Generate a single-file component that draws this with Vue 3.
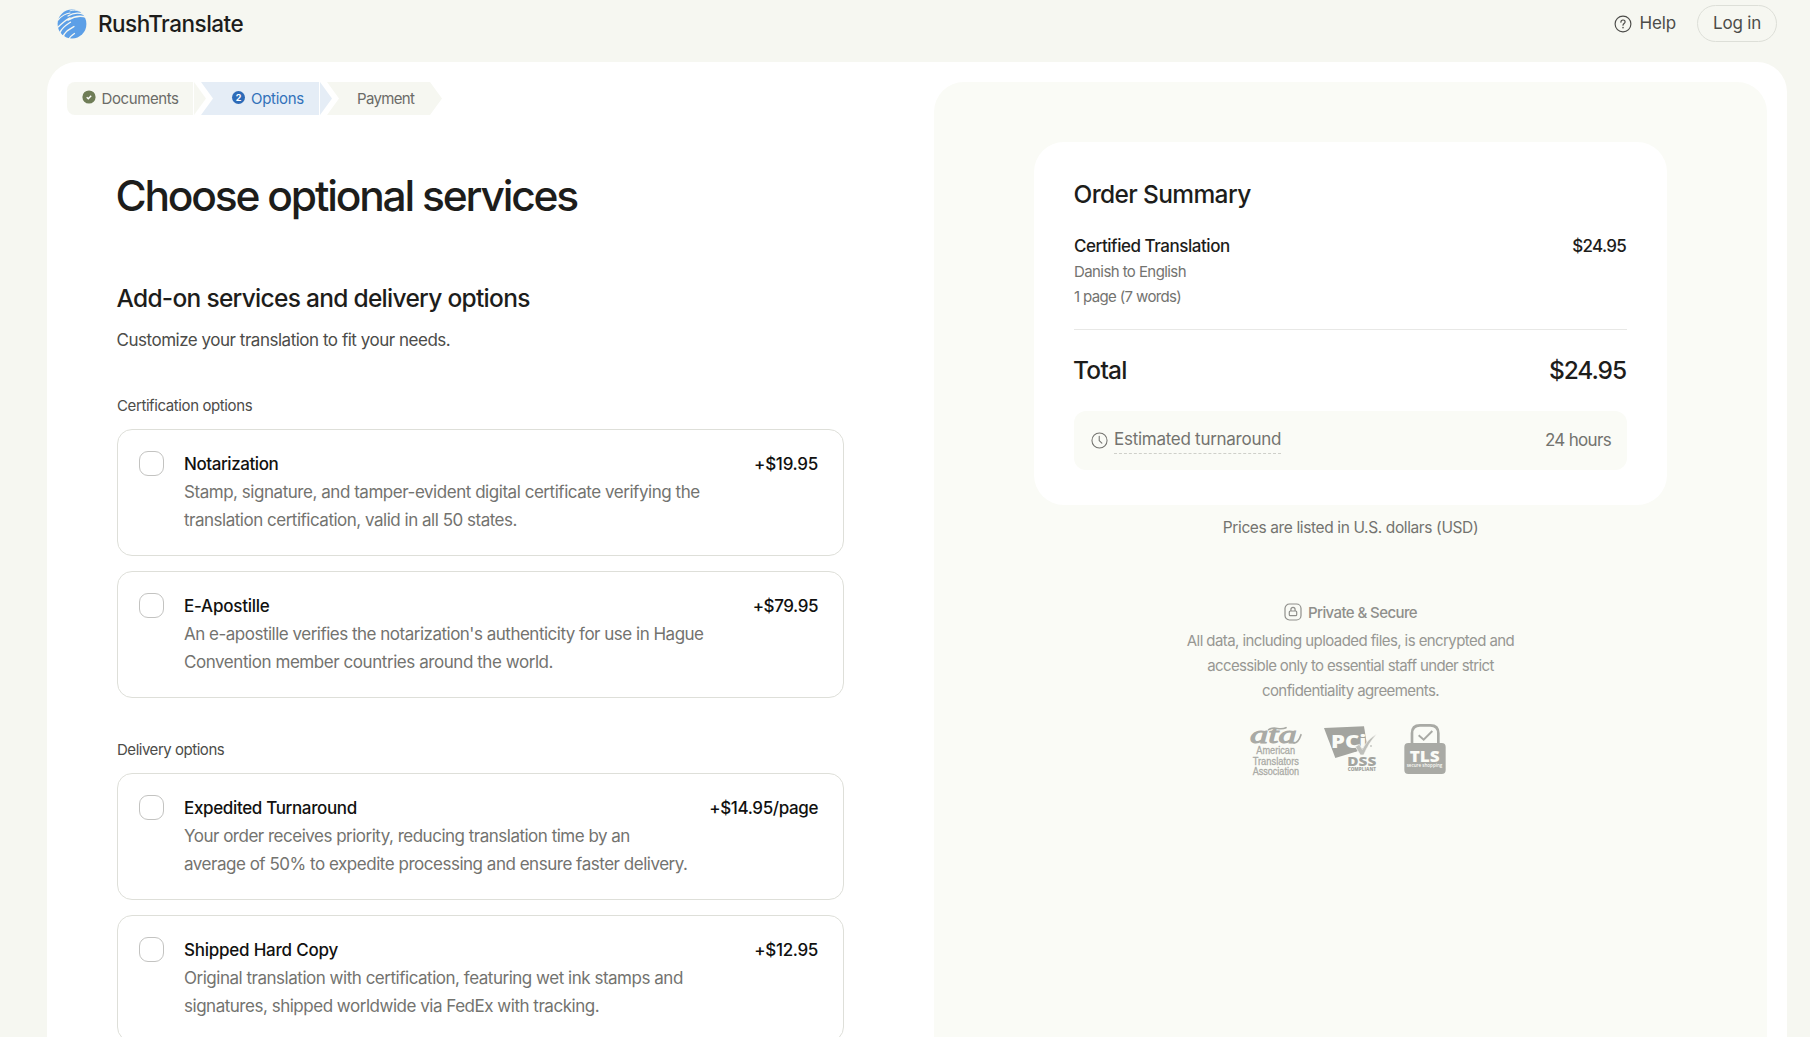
<script setup>
const groups = [
  {
    label: 'Certification options',
    spacing: -0.4,
    items: [
      {
        title: 'Notarization', titleSpacing: -0.43, price: '+$19.95', priceSpacing: -0.28,
        lines: [
          { text: 'Stamp, signature, and tamper-evident digital certificate verifying the', spacing: -0.46 },
          { text: 'translation certification, valid in all 50 states.', spacing: -0.49 },
        ],
      },
      {
        title: 'E-Apostille', titleSpacing: -0.23, price: '+$79.95', priceSpacing: -0.43,
        lines: [
          { text: "An e-apostille verifies the notarization's authenticity for use in Hague", spacing: -0.5 },
          { text: 'Convention member countries around the world.', spacing: -0.44 },
        ],
      },
    ],
  },
  {
    label: 'Delivery options',
    spacing: -0.47,
    items: [
      {
        title: 'Expedited Turnaround', titleSpacing: -0.35, price: '+$14.95/page', priceSpacing: -0.38,
        lines: [
          { text: 'Your order receives priority, reducing translation time by an', spacing: -0.5 },
          { text: 'average of 50% to expedite processing and ensure faster delivery.', spacing: -0.48 },
        ],
      },
      {
        title: 'Shipped Hard Copy', titleSpacing: -0.23, price: '+$12.95', priceSpacing: -0.35,
        lines: [
          { text: 'Original translation with certification, featuring wet ink stamps and', spacing: -0.48 },
          { text: 'signatures, shipped worldwide via FedEx with tracking.', spacing: -0.48 },
        ],
      },
    ],
  },
]

const px = (n) => ({ letterSpacing: n + 'px' })
</script>

<template>
  <div class="page">
    <header class="topbar">
      <div class="brand">
        <svg class="globe" viewBox="0 0 30 30" width="30" height="30">
          <circle cx="15" cy="15" r="14.4" fill="#5c9fe7" />
          <g fill="none" stroke="#f6f7f1" stroke-linecap="round">
            <path d="M1 11C5 6.500 9 4.500 13 4" stroke-width="1.200" />
            <path d="M11 7C16 3.800 22 3.500 27 5.500" stroke-width="1.200" />
            <path d="M0.500 18.500C5 15 8 11 13 8.800" stroke-width="1.300" />
            <path d="M11 11C17 7.300 24 6.500 30 8.500" stroke-width="1.500" />
            <path d="M3 23.500C4.500 19 8.500 16.500 13.500 13.200" stroke-width="1.300" />
            <path d="M6 28C7.500 23 11 21 17 17.500" stroke-width="1.300" />
            <path d="M12 30C13 27.500 14.500 26.500 17.500 24.500" stroke-width="1.200" />
            <path d="M13 1.800C16 1 19 1 22 2" stroke-width="0.800" />
          </g>
        </svg>
        <span class="brand-name">RushTranslate</span>
      </div>
      <nav class="actions">
        <a class="help">
          <svg viewBox="0 0 18 18" width="18" height="18" fill="none" stroke="#4c4c49" stroke-width="1.150" stroke-linecap="round">
            <circle cx="9" cy="9" r="7.900" />
            <path d="M6.900 7.200C6.900 5.900 7.800 5 9 5s2.100.8 2.100 1.900c0 1.500-2.100 1.700-2.100 3.300" />
            <path d="M9 12.600v.2" stroke-width="1.500" />
          </svg>
          <span>Help</span>
        </a>
        <a class="login">Log in</a>
      </nav>
    </header>

    <main class="sheet">
      <section class="left">
        <ol class="steps">
          <li class="step done">
            <svg viewBox="0 0 14 14" width="14" height="14">
              <circle cx="7" cy="7" r="6.600" fill="#6f7d57" />
              <path d="M4.700 7.200l1.600 1.500 2.900-3" fill="none" stroke="#fff" stroke-width="1.400" />
            </svg>
            <span>Documents</span>
          </li>
          <li class="step current"><b class="num">2</b><span>Options</span></li>
          <li class="step last"><span>Payment</span></li>
        </ol>

        <div class="content">
          <h1>Choose optional services</h1>
          <h2>Add-on services and delivery options</h2>
          <p class="lead">Customize your translation to fit your needs.</p>

          <div v-for="g in groups" :key="g.label" class="group">
            <div class="group-label" :style="px(g.spacing)">{{ g.label }}</div>
            <label v-for="i in g.items" :key="i.title" class="option">
              <span class="box"></span>
              <span class="body">
                <span class="head">
                  <span class="title" :style="px(i.titleSpacing)">{{ i.title }}</span>
                  <span class="price" :style="px(i.priceSpacing)">{{ i.price }}</span>
                </span>
                <span v-for="l in i.lines" :key="l.text" class="line" :style="px(l.spacing)">{{ l.text }}</span>
              </span>
            </label>
          </div>
        </div>
      </section>

      <aside class="right">
        <div class="summary">
          <h3>Order Summary</h3>
          <div class="row item"><span class="item-name">Certified Translation</span><span class="item-price">$24.95</span></div>
          <div class="meta">Danish to English</div>
          <div class="meta tight">1 page (7 words)</div>
          <hr />
          <div class="row total"><span>Total</span><span class="total-price">$24.95</span></div>
          <div class="row eta">
            <span class="eta-left">
              <svg viewBox="0 0 18 18" width="17" height="17" fill="none" stroke="#73736f" stroke-width="1.100" stroke-linecap="round" stroke-linejoin="round">
                <circle cx="9" cy="9" r="8" />
                <path d="M8.700 4.500v4.700l2.800 2.700" />
              </svg>
              <span class="eta-name">Estimated turnaround</span>
            </span>
            <span class="eta-time">24 hours</span>
          </div>
        </div>
        <p class="note">Prices are listed in U.S. dollars (USD)</p>

        <div class="secure">
          <svg viewBox="0 0 18 18" width="18" height="18" fill="none" stroke="#8f8f8b" stroke-width="1.200" stroke-linejoin="round">
            <rect x="1" y="1" width="16" height="16" rx="4.500" />
            <rect x="5.300" y="8" width="7.400" height="4.700" rx="1" />
            <path d="M6.900 8V6.500a2.100 2.100 0 0 1 4.200 0V8" />
          </svg>
          <span>Private &amp; Secure</span>
        </div>
        <p class="privacy">
          <span>All data, including uploaded files, is encrypted and</span>
          <span class="p2">accessible only to essential staff under strict</span>
          <span>confidentiality agreements.</span>
        </p>

        <div class="badges">
          <svg viewBox="24 24 162 168" width="54" height="56" fill="#a9aaa5">
            <text x="30" y="87" class="script" font-size="76" textLength="140" lengthAdjust="spacingAndGlyphs">ata</text>
            <path d="M86 47C104 35 118 51 138 41" fill="none" stroke="#a9aaa5" stroke-width="5" stroke-linecap="round" />
            <path d="M162 87C171 87 178 77 183 62" fill="none" stroke="#a9aaa5" stroke-width="5" stroke-linecap="round" />
            <g class="narrow" font-size="31">
              <text x="49" y="121" textLength="116" lengthAdjust="spacingAndGlyphs">American</text>
              <text x="38" y="152" textLength="139" lengthAdjust="spacingAndGlyphs">Translators</text>
              <text x="38" y="183" textLength="139" lengthAdjust="spacingAndGlyphs">Association</text>
            </g>
          </svg>
          <svg class="pci" viewBox="249 24 165 168" width="55" height="56">
            <path d="M252 42L372 37L382 100L352 112L286 132Z" fill="#a3a49f" />
            <g class="heavy">
              <text x="273" y="103" font-size="50" fill="#fafbf6" textLength="106" lengthAdjust="spacingAndGlyphs">PCi</text>
              <text x="322" y="157" font-size="38" fill="#a3a49f" textLength="87" lengthAdjust="spacingAndGlyphs">DSS</text>
              <text x="323" y="172" font-size="13" fill="#a3a49f" textLength="85" lengthAdjust="spacingAndGlyphs">COMPLIANT</text>
            </g>
            <path d="M346 98L358 91L367 106C378 86 391 70 410 61C394 78 382 98 371 123L361 123Z" fill="#bfc0bb" stroke="#fafbf6" stroke-width="2" />
            <circle cx="393" cy="96" r="2.500" fill="#a3a49f" />
          </svg>
          <svg viewBox="490 24 132 168" width="44" height="56">
            <path d="M517 92V58Q517 34 541 34H572Q596 34 596 58V92" fill="none" stroke="#a9aaa5" stroke-width="8" />
            <path d="M537 64L552 77L578 51" fill="none" stroke="#a9aaa5" stroke-width="6" />
            <rect x="494" y="87" width="124" height="93" rx="12" fill="#a9aaa5" />
            <g class="heavy" fill="#fafbf6">
              <text x="510" y="144" font-size="47" textLength="90" lengthAdjust="spacingAndGlyphs">TLS</text>
              <text x="501" y="158" class="small" font-size="14" textLength="107" lengthAdjust="spacingAndGlyphs">secure shopping</text>
            </g>
          </svg>
        </div>
      </aside>
    </main>
  </div>
</template>

<style>
html, body { margin: 0; height: 100%; overflow: hidden; background: #f6f7f1; }
</style>

<style scoped>
.page {
  height: 1037px;
  overflow: hidden;
  display: flex;
  flex-direction: column;
  background: #f6f7f1;
  font-family: Inter, "Liberation Sans", sans-serif;
  color: #1d1d1b;
  white-space: nowrap;
}
h1, h2, h3, p, ol { margin: 0; padding: 0; font-weight: 500; }
.topbar {
  height: 62px;
  flex: none;
  box-sizing: border-box;
  padding: 5px 33px 20px 57px;
  display: flex;
  justify-content: space-between;
  align-items: center;
}
.brand { display: flex; align-items: center; gap: 11px; }
.globe { display: block; }
.brand-name { font-size: 22.5px; font-weight: 550; letter-spacing: -0.5px; margin-top: -1px; }
.actions { display: flex; align-items: center; font-size: 17px; color: #4c4c49; }
.help { display: flex; align-items: center; gap: 8px; margin-right: 21px; letter-spacing: -0.15px; }
.help span { margin-top: -1px; }
.login {
  box-sizing: border-box;
  width: 80px;
  height: 37px;
  line-height: 34px;
  text-align: center;
  border: 1px solid #dddfd8;
  border-radius: 19px;
  letter-spacing: -0.2px;
}
.sheet {
  flex: 1;
  margin: 0 23px 0 47px;
  padding: 20px 20px 0;
  background: #fff;
  border-radius: 30px 30px 0 0;
  display: flex;
  justify-content: space-between;
}
.left { width: 777px; }
.steps { display: flex; list-style: none; height: 33px; font-size: 15px; color: #6b6b67; }
.step {
  box-sizing: border-box;
  display: flex;
  align-items: center;
  height: 33px;
  font-weight: 400;
}
.done {
  width: 139px;
  padding-left: 15px;
  gap: 5.5px;
  border-radius: 8px 0 0 8px;
  letter-spacing: -0.4px;
  background: linear-gradient(90deg, #f6f7f1 126px, #fff 126px, #fff 127px, #f6f7f1 127px);
  clip-path: polygon(0 0, 127px 0, 100% 50%, 127px 100%, 0 100%);
}
.done svg { margin-bottom: 3px; }
.current {
  width: 131px;
  margin-left: -5px;
  padding-left: 31px;
  gap: 6px;
  color: #3272ba;
  letter-spacing: -0.3px;
  background: linear-gradient(90deg, #e5edf6 118px, #fff 118px, #fff 119px, #e5edf6 119px);
  clip-path: polygon(0 0, 119px 0, 100% 50%, 119px 100%, 0 100%, 12px 50%);
}
.num {
  width: 13px;
  height: 13px;
  border-radius: 50%;
  background: #2d6bb8;
  color: #fff;
  font-size: 9px;
  line-height: 13px;
  text-align: center;
  letter-spacing: 0;
  margin-bottom: 3px;
}
.last {
  width: 115px;
  margin-left: -5px;
  padding-left: 30px;
  letter-spacing: -0.65px;
  background: #f6f7f1;
  clip-path: polygon(0 0, 103px 0, 100% 50%, 103px 100%, 0 100%, 12px 50%);
}
.content { padding: 51px 0 0 50px; }
h1 { font-size: 42.5px; line-height: 60px; letter-spacing: -2.2px; margin-left: -1.5px; }
h2 { margin-top: 57px; font-size: 24.5px; line-height: 30px; letter-spacing: -0.71px; margin-left: -0.5px; }
.lead { margin-top: 13px; font-size: 17px; font-weight: 400; line-height: 28px; letter-spacing: -0.48px; color: #4c4c49; margin-left: -0.5px; }
.group-label { font-size: 15px; line-height: 24px; color: #4c4c49; margin-bottom: 11px; }
.group { margin-top: 40px; }
.option {
  box-sizing: border-box;
  width: 727px;
  height: 127px;
  padding: 20px 25px 0 21px;
  border: 1px solid #dedfd9;
  border-radius: 15px;
  display: flex;
  gap: 20px;
}
.option + .option { margin-top: 15px; }
.box {
  box-sizing: border-box;
  width: 25px;
  height: 25px;
  margin-top: 1px;
  border: 1px solid #c3c3c1;
  border-radius: 9px;
  flex: none;
}
.body { flex: 1; font-size: 17px; line-height: 28.25px; margin-top: -0.5px; }
.head { display: flex; justify-content: space-between; font-weight: 500; color: #111110; }
.line { display: block; color: #73736f; }
.right {
  box-sizing: border-box;
  width: 833px;
  background: #fafbf6;
  border-radius: 30px 30px 0 0;
  padding: 60px 100px 0;
  display: flex;
  flex-direction: column;
  align-items: center;
}
.summary {
  box-sizing: border-box;
  width: 633px;
  height: 363px;
  padding: 36px 40px 0;
  background: #fff;
  border-radius: 30px;
}
h3 { font-size: 24.5px; line-height: 32px; letter-spacing: -0.63px; margin-left: -0.5px; }
.row { display: flex; justify-content: space-between; align-items: center; }
.item { margin-top: 22px; font-size: 17px; line-height: 28px; font-weight: 500; }
.item-name { letter-spacing: -0.46px; }
.item-price { letter-spacing: -0.72px; margin-right: 1px; }
.meta { font-size: 15px; line-height: 25px; letter-spacing: -0.58px; color: #73736f; }
.item + .meta { margin-top: -1px; }
.tight { letter-spacing: -0.64px; }
hr { margin: 20px 0 0; border: 0; height: 1px; background: #e8e8e6; }
.total { margin-top: 24px; font-size: 24.5px; line-height: 33px; font-weight: 500; letter-spacing: -0.75px; }
.total span:first-child { margin-left: -1px; }
.total-price { letter-spacing: -1.1px; margin-right: 1px; }
.eta {
  box-sizing: border-box;
  margin-top: 24px;
  height: 59px;
  padding: 0 16px 0 17px;
  border-radius: 12px;
  background: #fafbf6;
  font-size: 17px;
  color: #73736f;
}
.eta-left { display: flex; align-items: center; gap: 6px; }
.eta-name { line-height: 24px; padding-bottom: 2px; border-bottom: 1px dashed #cfd0ca; letter-spacing: -0.27px; }
.eta-time { letter-spacing: -0.68px; margin-bottom: 2px; }
.note { margin-top: 11px; font-size: 15.5px; line-height: 24px; font-weight: 400; letter-spacing: -0.38px; color: #73736f; }
.secure { margin-top: 59px; display: flex; align-items: center; gap: 6px; height: 26px; font-size: 15px; font-weight: 500; letter-spacing: -0.59px; color: #8f8f8b; }
.privacy { margin-top: 4px; display: flex; flex-direction: column; align-items: center; font-size: 15px; line-height: 24.75px; letter-spacing: -0.58px; color: #979793; }
.privacy span { font-weight: 400; }
.p2 { letter-spacing: -0.63px; }
.badges { margin: 19px 6px 0 0; display: flex; width: 199px; justify-content: space-between; }
.badges svg { display: block; overflow: visible; }
.pci { margin-right: 5px; }
.script { font-family: "Liberation Serif", serif; font-style: italic; stroke: #a9aaa5; stroke-width: 3px; }
.narrow { font-family: "Liberation Sans", sans-serif; stroke: #a9aaa5; stroke-width: 0.8px; }
.heavy { font-family: "Open Sans", sans-serif; font-weight: 800; }
.small { font-weight: 600; }
</style>
